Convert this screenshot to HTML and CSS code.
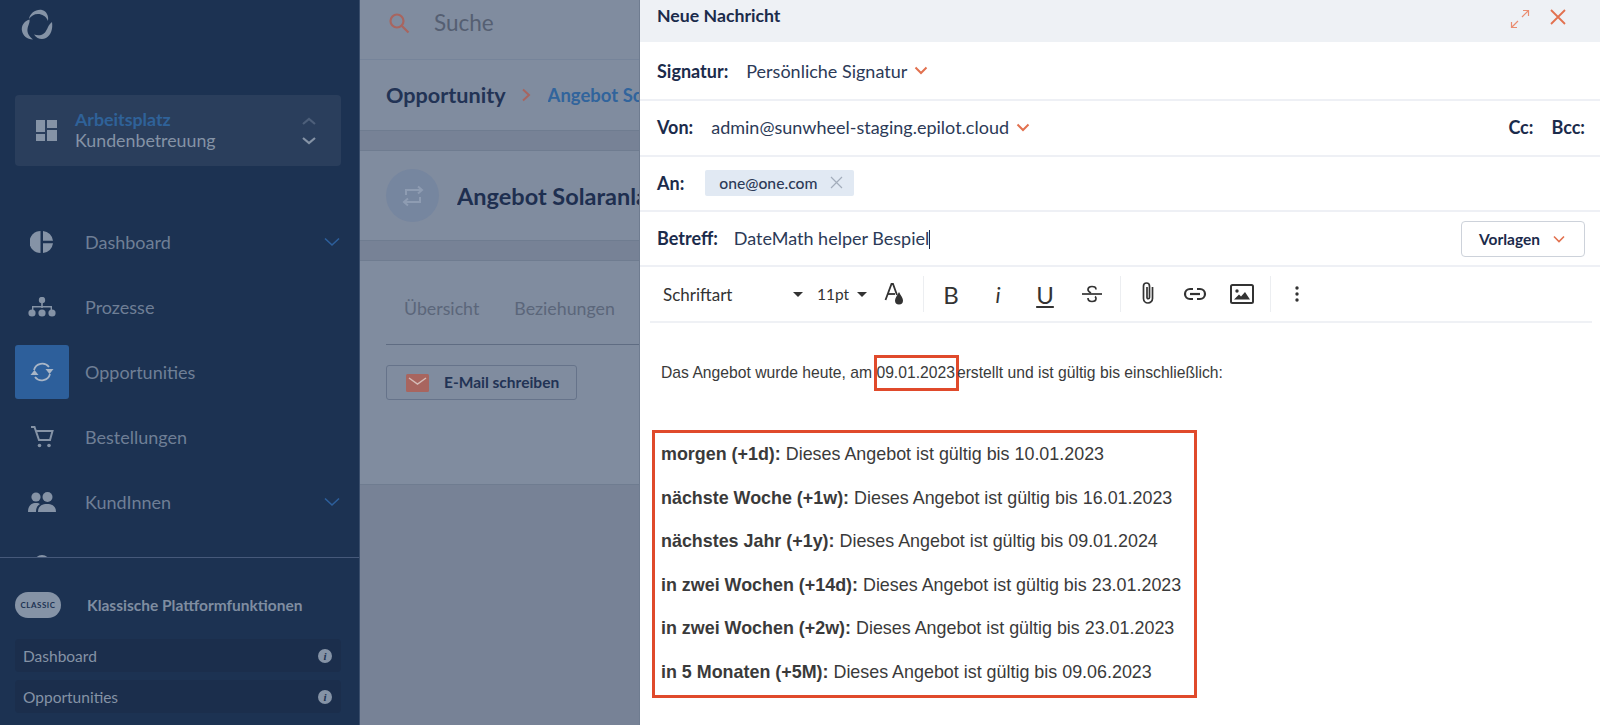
FILE: index.html
```html
<!DOCTYPE html>
<html lang="de">
<head>
  <meta charset="UTF-8" />
  <meta name="viewport" content="width=device-width, initial-scale=1.0"/>
  <title>Neue Nachricht</title>
  <link rel="stylesheet" href="styles.css">
</head>
<body>
  <div class="app">
    <aside class="sidebar">
      <div class="logo">
        <svg width="32" height="32" viewBox="0 0 32 32" fill="#8593a6">
          <path d="M8 10C9 4 15 0 21 1C25 2 28 6 27 12C25 7 21 5 17 5C13 5 10 7 8 10Z"/>
          <path d="M8.500 10.500C3 12 0 17 1 22C2 27 6 30 12 30.500C8 27 6 24 6.500 20C7 16 9 14 8.500 10.500Z"/>
          <path d="M31 13C32 20 30 26 25 29C21 31 16 30 13 25.500C17 27 21 26.500 24 23.500C26.500 20.500 27 16 31 13Z"/>
        </svg>
      </div>
      <div class="workspace">
        <svg class="ws-icon" width="21" height="21" viewBox="0 0 21 21" fill="#8593a6">
          <rect x="0" y="0" width="9" height="12"/>
          <rect x="11" y="0" width="10" height="8"/>
          <rect x="0" y="14" width="9" height="7"/>
          <rect x="11" y="10" width="10" height="11"/>
        </svg>
        <div class="ws-text">
          <div class="ws-title">Arbeitsplatz</div>
          <div class="ws-name">Kundenbetreuung</div>
        </div>
        <div class="ws-arrows">
          <svg width="14" height="9" viewBox="0 0 14 9"><path d="M1 7L7 2L13 7" fill="none" stroke="#4d5f7a" stroke-width="2.200"/></svg>
          <svg width="14" height="9" viewBox="0 0 14 9"><path d="M1 2L7 7L13 2" fill="none" stroke="#8593a6" stroke-width="2.200"/></svg>
        </div>
      </div>
      <nav class="nav">
        <div class="nav-item">
          <span class="nav-icon">
            <svg width="24" height="24" viewBox="0 0 24 24" fill="#8593a6">
              <path d="M10.500 1A11 11 0 0 0 10.500 23Z"/>
              <path d="M13 1A11 11 0 0 1 23 10.800H13Z"/>
              <path d="M13 13.200H23A11 11 0 0 1 13 23Z"/>
            </svg>
          </span>
          <span class="nav-label">Dashboard</span>
          <svg class="nav-chevron" width="16" height="10" viewBox="0 0 16 10"><path d="M1 1.500L8 8L15 1.500" fill="none" stroke="#2d5f9b" stroke-width="1.600"/></svg>
        </div>
        <div class="nav-item">
          <span class="nav-icon">
            <svg width="28" height="20" viewBox="0 0 28 20" fill="#8593a6">
              <circle cx="14" cy="3" r="3.200"/>
              <rect x="13.200" y="5" width="1.600" height="6"/>
              <path d="M4 13V9H24V13H22.600V10.400H5.400V13Z"/>
              <circle cx="4" cy="16" r="3.600"/><circle cx="14" cy="16" r="3.600"/><circle cx="24" cy="16" r="3.600"/>
            </svg>
          </span>
          <span class="nav-label">Prozesse</span>
        </div>
        <div class="nav-item">
          <span class="nav-icon active">
            <svg width="28" height="24" viewBox="0 0 28 24" fill="none" stroke="#a9b6c7" stroke-width="1.800">
              <path d="M6 10A8.500 8.500 0 0 1 21 7"/>
              <path d="M22 14A8.500 8.500 0 0 1 7 17"/>
              <path d="M17.500 9H25.500L21.500 14Z" fill="#a9b6c7" stroke="none"/>
              <path d="M2.500 15H10.500L6.500 10Z" fill="#a9b6c7" stroke="none"/>
            </svg>
          </span>
          <span class="nav-label">Opportunities</span>
        </div>
        <div class="nav-item">
          <span class="nav-icon">
            <svg width="24" height="22" viewBox="0 0 24 22" fill="none" stroke="#8593a6" stroke-width="2">
              <path d="M1 1H4.500L9 14H20L22.500 5H6"/>
              <circle cx="9.500" cy="19.500" r="1.800" fill="#8593a6" stroke="none"/>
              <circle cx="19" cy="19.500" r="1.800" fill="#8593a6" stroke="none"/>
            </svg>
          </span>
          <span class="nav-label">Bestellungen</span>
        </div>
        <div class="nav-item">
          <span class="nav-icon">
            <svg width="28" height="20" viewBox="0 0 28 20" fill="#8593a6">
              <circle cx="8" cy="5" r="4.600"/><circle cx="19.500" cy="5" r="5"/>
              <path d="M0 20C0 13 4 11 8 11C10 11 11.500 11.600 12 12C9 14 8 16 8 20Z"/>
              <path d="M10 20C10 14 14 12 19 12C24 12 28 14 28 20Z"/>
            </svg>
          </span>
          <span class="nav-label">KundInnen</span>
          <svg class="nav-chevron" width="16" height="10" viewBox="0 0 16 10"><path d="M1 1.500L8 8L15 1.500" fill="none" stroke="#2d5f9b" stroke-width="1.600"/></svg>
        </div>
        <div class="nav-item">
          <span class="nav-icon">
            <svg width="24" height="24" viewBox="0 0 24 24" fill="#8593a6"><circle cx="12" cy="8" r="8"/><path d="M2 24C2 18 7 16 12 16C17 16 22 18 22 24Z"/></svg>
          </span>
        </div>
      </nav>
      <div class="classic">
        <div class="classic-head">
          <span class="classic-badge">CLASSIC</span>
          <span class="classic-title">Klassische Plattformfunktionen</span>
        </div>
        <div class="classic-item"><span>Dashboard</span><i class="info">i</i></div>
        <div class="classic-item"><span>Opportunities</span><i class="info">i</i></div>
      </div>
    </aside>

    <main class="main">
      <div class="search">
        <svg width="22" height="22" viewBox="0 0 22 22" fill="none" stroke="#a8655f" stroke-width="2.200">
          <circle cx="9" cy="9" r="6.500"/><path d="M14 14L20.500 20.500"/>
        </svg>
        <span>Suche</span>
      </div>
      <div class="crumbs">
        <span class="crumb-main">Opportunity</span>
        <svg width="10" height="14" viewBox="0 0 10 14"><path d="M2 1.500L8 7L2 12.500" fill="none" stroke="#a8655f" stroke-width="2"/></svg>
        <span class="crumb-link">Angebot Solaranlage</span>
      </div>
      <div class="entity">
        <span class="entity-icon">
          <svg width="24" height="24" viewBox="0 0 24 24" fill="none" stroke="#8e9cb2" stroke-width="2">
            <path d="M5 11V6H20M17 2.500L21 6L17 9.500"/><path d="M19 13V18H4M7 14.500L3 18L7 21.500"/>
          </svg>
        </span>
        <span class="entity-title">Angebot Solaranlage</span>
      </div>
      <div class="content">
        <div class="tabs"><span>Übersicht</span><span>Beziehungen</span></div>
        <button class="mail-btn">
          <svg width="23" height="18" viewBox="0 0 23 18"><rect width="23" height="18" rx="1.500" fill="#a8655f"/><path d="M3 4L11.500 10L20 4" fill="none" stroke="#d5bcb8" stroke-width="1.500"/></svg>
          <span>E-Mail schreiben</span>
        </button>
      </div>
    </main>

    <section class="modal">
      <header class="modal-head">
        <span class="modal-title">Neue Nachricht</span>
        <div class="modal-actions">
          <svg width="20" height="20" viewBox="0 0 20 20" fill="none" stroke="#ea8d70" stroke-width="1.200">
            <path d="M12 8L18.500 1.500M13 1.500H18.500V7"/><path d="M8 12L1.500 18.500M7 18.500H1.500V13"/>
          </svg>
          <svg width="16" height="16" viewBox="0 0 16 16" fill="none" stroke="#e2714f" stroke-width="1.800">
            <path d="M1 1L15 15M15 1L1 15"/>
          </svg>
        </div>
      </header>
      <div class="field field-first">
        <span class="field-label">Signatur:</span>
        <span class="field-value">Persönliche Signatur</span>
        <svg class="chev" width="14" height="9" viewBox="0 0 14 9"><path d="M1.500 1.500L7 7L12.500 1.500" fill="none" stroke="#e2714f" stroke-width="2"/></svg>
      </div>
      <div class="field field-from">
        <span class="field-label">Von:</span>
        <span class="field-value">admin@sunwheel-staging.epilot.cloud</span>
        <svg class="chev" width="14" height="9" viewBox="0 0 14 9"><path d="M1.500 1.500L7 7L12.500 1.500" fill="none" stroke="#e2714f" stroke-width="2"/></svg>
        <div class="cc"><span>Cc:</span><span>Bcc:</span></div>
      </div>
      <div class="field">
        <span class="field-label">An:</span>
        <span class="tag">one@one.com
          <svg width="13" height="13" viewBox="0 0 13 13" fill="none" stroke="#a3adbb" stroke-width="1.200"><path d="M1 1L12 12M12 1L1 12"/></svg>
        </span>
      </div>
      <div class="field">
        <span class="field-label">Betreff:</span>
        <span class="field-value subject">DateMath helper Bespiel</span>
        <button class="templates">Vorlagen
          <svg width="12" height="8" viewBox="0 0 12 8"><path d="M1 1.500L6 6.500L11 1.500" fill="none" stroke="#e2714f" stroke-width="1.600"/></svg>
        </button>
      </div>
      <div class="toolbar">
        <span class="tb-font">Schriftart</span><i class="caret"></i>
        <span class="tb-size">11pt</span><i class="caret"></i>
        <svg class="tb-color" width="22" height="24" viewBox="0 0 22 24">
          <path d="M1.500 18L7.500 2H9L13 13" fill="none" stroke="#333" stroke-width="1.800"/>
          <path d="M4 12H11" stroke="#333" stroke-width="1.800"/>
          <path d="M15 10C13 14 11 16 11 18.500A4 4 0 0 0 19 18.500C19 16 17 14 15 10Z" fill="#333"/>
        </svg>
        <span class="tb-sep"></span>
        <span class="tb-btn tb-b">B</span>
        <span class="tb-btn tb-i">i</span>
        <span class="tb-btn tb-u">U</span>
        <span class="tb-btn tb-s">
          <svg width="22" height="22" viewBox="0 0 22 22" fill="none" stroke="#333" stroke-width="1.700">
            <path d="M1 11H21"/><path d="M15 6.500C15 4 13 3.500 11 3.500C9 3.500 7 4.500 7 6.500C7 8 8 9 10 10"/><path d="M7 15C7 17.500 9 18.500 11 18.500C13 18.500 15 17.500 15 15.500C15 14.500 14.700 14 14 13.500"/>
          </svg>
        </span>
        <span class="tb-sep"></span>
        <span class="tb-btn tb-clip">
          <svg width="16" height="24" viewBox="0 0 16 24" fill="none" stroke="#333" stroke-width="1.700">
            <path d="M12.500 6V17.500A4.500 4.500 0 0 1 3.500 17.500V5A3 3 0 0 1 9.500 5V16.500A1.250 1.250 0 0 1 7 16.500V6"/>
          </svg>
        </span>
        <span class="tb-btn">
          <svg width="24" height="14" viewBox="0 0 24 14" fill="none" stroke="#333" stroke-width="2.200">
            <path d="M10 2H7A5 5 0 0 0 7 12H10"/><path d="M14 2H17A5 5 0 0 1 17 12H14"/><path d="M7 7H17"/>
          </svg>
        </span>
        <span class="tb-btn">
          <svg width="24" height="20" viewBox="0 0 24 20">
            <rect x="1" y="1" width="22" height="18" rx="1.500" fill="none" stroke="#333" stroke-width="2"/>
            <circle cx="7" cy="7" r="1.700" fill="#333"/>
            <path d="M4 15.500L9 10.500L11 12.500L15 8L20 15.500Z" fill="#333"/>
          </svg>
        </span>
        <span class="tb-sep"></span>
        <span class="tb-btn">
          <svg width="4" height="16" viewBox="0 0 4 16" fill="#333"><circle cx="2" cy="2" r="1.700"/><circle cx="2" cy="8" r="1.700"/><circle cx="2" cy="14" r="1.700"/></svg>
        </span>
      </div>
      <div class="editor">
        <p class="intro">Das Angebot wurde heute, am <span class="date-mark">09.01.2023</span>erstellt und ist gültig bis einschließlich:</p>
        <div class="dates">
          <p><b>morgen (+1d):</b> Dieses Angebot ist gültig bis 10.01.2023</p>
          <p><b>nächste Woche (+1w):</b> Dieses Angebot ist gültig bis 16.01.2023</p>
          <p><b>nächstes Jahr (+1y):</b> Dieses Angebot ist gültig bis 09.01.2024</p>
          <p><b>in zwei Wochen (+14d):</b> Dieses Angebot ist gültig bis 23.01.2023</p>
          <p><b>in zwei Wochen (+2w):</b> Dieses Angebot ist gültig bis 23.01.2023</p>
          <p><b>in 5 Monaten (+5M):</b> Dieses Angebot ist gültig bis 09.06.2023</p>
        </div>
      </div>
    </section>
  </div>
</body>
</html>
```

FILE: styles.css
```css
* {
  box-sizing: border-box;
}
html, body {
  margin: 0;
  height: 100%;
  overflow: hidden;
}
body {
  font-family: Lato, "Open Sans", sans-serif;
  color: #1b2b4b;
}
.app {
  display: flex;
  height: 725px;
  overflow: hidden;
}

/* sidebar */
.sidebar {
  width: 360px;
  flex: none;
  background: #1c3252;
  display: flex;
  flex-direction: column;
  border-right: 1px solid #3a4e6c;
}
.logo {
  padding: 9px 0 0 21px;
  height: 95px;
}
.workspace {
  margin-left: 15px;
  width: 326px;
  height: 71px;
  background: #2a3e5c;
  border-radius: 4px;
  display: flex;
  align-items: center;
  padding: 0 25px 0 21px;
}
.ws-icon {
  margin-right: 18px;
}
.ws-text {
  flex: 1;
  font-size: 17.800px;
  line-height: 21px;
  padding-bottom: 2px;
}
.ws-title {
  color: #2f6299;
  font-weight: 700;
}
.ws-name {
  color: #8593a6;
}
.ws-arrows {
  display: flex;
  flex-direction: column;
  gap: 10px;
}
.nav {
  margin-top: 49px;
  padding-left: 15px;
  height: 342px;
  flex: none;
  overflow: hidden;
}
.nav-item {
  display: flex;
  align-items: center;
  height: 54px;
  margin-bottom: 11px;
  color: #6f7f96;
  font-size: 18px;
}
.nav-icon {
  width: 54px;
  height: 54px;
  display: flex;
  align-items: center;
  justify-content: center;
  border-radius: 3px;
  margin-right: 16px;
  flex: none;
}
.nav-icon.active {
  background: #2d5f9b;
}
.nav-chevron {
  margin-left: auto;
  margin-right: 19px;
}
.classic {
  border-top: 1px solid #46597a;
  flex: 1;
  padding: 34px 18px 0 15px;
}
.classic-head {
  display: flex;
  align-items: center;
  margin-bottom: 21px;
}
.classic-badge {
  width: 46px;
  height: 26px;
  background: #8593a6;
  border-radius: 13px;
  color: #1c3252;
  font-size: 8px;
  font-weight: 700;
  letter-spacing: 0.5px;
  display: flex;
  align-items: center;
  justify-content: center;
  margin-right: 26px;
}
.classic-title {
  font-size: 15.500px;
  font-weight: 700;
  color: #7f8da1;
}
.classic-item {
  display: flex;
  align-items: center;
  justify-content: space-between;
  height: 33px;
  margin-bottom: 8px;
  background: #1b2e4c;
  border-radius: 4px;
  padding: 0 9px 0 8px;
  font-size: 15.500px;
  color: #8593a6;
}
.info {
  width: 14px;
  height: 14px;
  border-radius: 50%;
  background: #8593a6;
  color: #1c3252;
  font: italic 700 11px/14px "Liberation Serif", serif;
  text-align: center;
}

/* page behind the dialog */
.main {
  width: 280px;
  flex: none;
  background: #778296;
  border-right: 1px solid #6f7c90;
  overflow: hidden;
  white-space: nowrap;
}
.search {
  height: 60px;
  display: flex;
  align-items: center;
  padding: 0 0 14px 28px;
  gap: 24px;
  font-size: 22.500px;
  color: #555f72;
  background: #808c9f;
  border-bottom: 1px solid #76849a;
}
.crumbs {
  height: 71px;
  display: flex;
  align-items: center;
  padding-left: 26px;
  gap: 15px;
  background: #808c9f;
  border-bottom: 1px solid #6f7c90;
}
.crumbs svg {
  flex: none;
}
.crumb-main {
  font-size: 21.600px;
  font-weight: 700;
  color: #223355;
  flex: none;
}
.crumb-link {
  font-size: 18.500px;
  font-weight: 700;
  color: #31649c;
  margin-left: 2px;
  min-width: 0;
  overflow: hidden;
}
.entity {
  margin-top: 19px;
  height: 91px;
  display: flex;
  align-items: center;
  padding-left: 26px;
  gap: 18px;
  border-top: 1px solid #6f7c90;
  border-bottom: 1px solid #6f7c90;
  background: #808c9f;
}
.entity-icon {
  width: 53px;
  height: 53px;
  border-radius: 50%;
  background: #76869f;
  display: flex;
  align-items: center;
  justify-content: center;
  flex: none;
}
.entity-title {
  font-size: 23.500px;
  font-weight: 700;
  color: #1e2f50;
  min-width: 0;
  overflow: hidden;
}
.content {
  margin-top: 19px;
  height: 225px;
  border-top: 1px solid #6f7c90;
  border-bottom: 1px solid #6f7c90;
  background: #808c9f;
  padding: 0 0 0 26px;
}
.tabs {
  display: flex;
  gap: 35px;
  height: 84px;
  align-items: center;
  padding: 10px 0 0 18px;
  font-size: 17.800px;
  color: #5b667a;
  border-bottom: 1px solid #5f6c82;
}
.mail-btn {
  margin-top: 20px;
  width: 191px;
  height: 35px;
  display: flex;
  align-items: center;
  gap: 15px;
  padding: 0 0 0 19px;
  background: transparent;
  border: 1px solid #66738a;
  border-radius: 3px;
  font-family: inherit;
  font-size: 15.500px;
  font-weight: 700;
  color: #223355;
}
.mail-btn span {
  margin-top: -2px;
}

/* dialog */
.modal {
  flex: 1;
  min-width: 0;
  background: #fff;
  display: flex;
  flex-direction: column;
}
.modal-head {
  height: 42px;
  background: #eef1f5;
  display: flex;
  justify-content: space-between;
  padding: 5px 34px 0 17px;
}
.modal-title {
  font-size: 17.700px;
  font-weight: 700;
  color: #1b2b4b;
}
.modal-actions {
  display: flex;
  gap: 20px;
  align-items: flex-start;
  padding-top: 4px;
}
.field {
  height: 55px;
  display: flex;
  align-items: center;
  padding: 0 15px 2px 17px;
  border-bottom: 2px solid #eef0f5;
  font-size: 18px;
  color: #2c3a57;
  flex: none;
}
.field-first {
  height: 59px;
  padding-top: 2px;
}
.field-from {
  height: 56px;
}
.field-label {
  font-weight: 700;
  color: #1b2b4b;
  margin-right: 18px;
}
.chev {
  margin-left: 7px;
}
.cc {
  margin-left: auto;
  display: flex;
  gap: 18px;
  font-weight: 700;
  color: #1b2b4b;
}
.tag {
  margin-left: 3px;
  display: flex;
  align-items: center;
  gap: 13px;
  height: 26px;
  padding: 0 11px 0 14px;
  background: #e1e9f3;
  border-radius: 2px;
  font-size: 15.700px;
  font-weight: 500;
}
.subject {
  flex: 1;
  margin-left: -2px;
}
.subject::after {
  content: "";
  display: inline-block;
  width: 1px;
  height: 19px;
  background: #1b2b4b;
  vertical-align: -4px;
}
.templates {
  width: 124px;
  height: 36px;
  margin-top: 2px;
  display: flex;
  align-items: center;
  justify-content: space-between;
  padding: 0 19px 0 17px;
  background: #fff;
  border: 1px solid #cdd2da;
  border-radius: 4px;
  font-family: inherit;
  font-size: 15.500px;
  font-weight: 700;
  color: #1b2b4b;
}
.toolbar {
  height: 56px;
  flex: none;
  margin: 0 8px 0 10px;
  display: flex;
  align-items: center;
  border-bottom: 2px solid #eff1f5;
  padding-left: 13px;
  color: #333;
  font-size: 17px;
}
.tb-font {
  width: 122px;
}
.tb-size {
  margin-left: 14px;
  width: 30px;
  font-size: 15.500px;
  white-space: nowrap;
}
.caret {
  width: 0;
  height: 0;
  border-left: 5px solid transparent;
  border-right: 5px solid transparent;
  border-top: 5px solid #333;
  margin-left: 8px;
}
.tb-size + .caret {
  margin-left: 10px;
}
.tb-color {
  margin-left: 17px;
  flex: none;
}
.tb-sep {
  width: 1px;
  height: 36px;
  background: #eceef1;
  margin: 0 3px 0 4.500px;
}
.tb-color + .tb-sep {
  margin-left: 17px;
}
.tb-btn {
  width: 47px;
  flex: none;
  display: flex;
  justify-content: center;
  align-items: center;
  font-size: 24px;
}
.tb-b {
  margin-left: 0.500px;
}
.tb-i {
  font-style: italic;
  font-size: 22px;
}
.tb-u {
  text-decoration: underline;
  text-decoration-thickness: 2px;
  text-underline-offset: 2px;
}
.tb-clip svg {
  margin-top: -3px;
}
.editor {
  padding: 33.500px 0 0 21px;
  font-family: "Liberation Sans", Arial, sans-serif;
  color: #3a3a3a;
}
.intro {
  margin: 0 0 41px;
  font-size: 15.700px;
  line-height: 32px;
  white-space: nowrap;
}
.date-mark {
  display: inline-block;
  outline: 3px solid #e04a2b;
  outline-offset: -1px;
  padding: 0 2px 0 0;
}
.dates {
  margin-left: -9px;
  width: 545px;
  height: 268.500px;
  border: 3px solid #e04a2b;
  padding: 0 0 0 6px;
  font-size: 17.900px;
}
.dates p {
  margin: 0;
  height: 43.500px;
  line-height: 43.500px;
  white-space: nowrap;
}
.dates p:first-child {
  margin-top: 0.500px;
}
```
